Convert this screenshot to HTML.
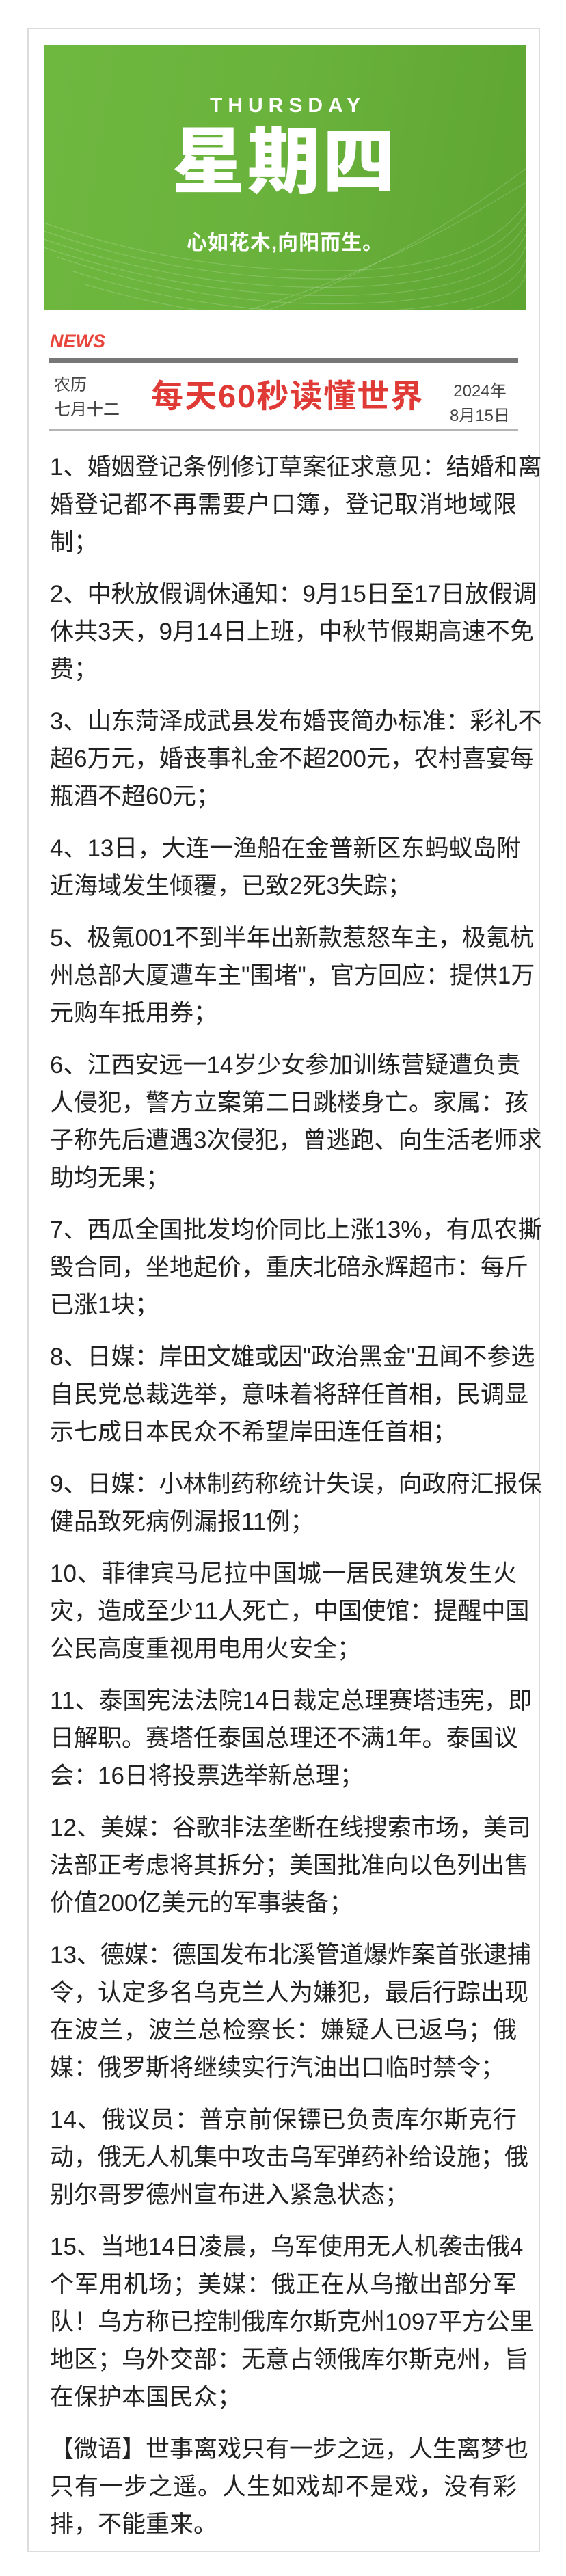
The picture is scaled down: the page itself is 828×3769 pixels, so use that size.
<!DOCTYPE html>
<html><head><meta charset="utf-8"><style>
*{margin:0;padding:0;box-sizing:border-box}
html,body{width:828px;height:3769px;background:#fff;overflow:hidden}
body{position:relative;font-family:"Liberation Sans","Noto Sans CJK SC",sans-serif;color:#222}
.card{position:absolute;left:40px;top:41px;width:750px;height:3693px;border:2px solid #dcdcdc}
.green{position:absolute;left:64px;top:66px;width:706px;height:387px;background:linear-gradient(100deg,#6fb840 0%,#69b23b 50%,#5ea532 100%);overflow:hidden}
.abs{position:absolute;left:0;width:100%;text-align:center;color:#fff}
.news{position:absolute;left:73px;top:484px;font-size:27px;font-weight:bold;font-style:italic;color:#e8463c}
.bar{position:absolute;left:72px;top:524px;width:686px;height:7px;background:#777}
.line2{position:absolute;left:72px;top:628px;width:686px;height:2px;background:#b5b5b5}
.lunar{position:absolute;left:79px;top:546px;font-size:24px;line-height:36px;color:#444}
.title{position:absolute;left:221px;top:550px;font-size:47px;font-weight:bold;color:#e03a36;letter-spacing:2px;line-height:60px}
.date{position:absolute;left:652px;top:555px;width:100px;text-align:center;font-size:24px;line-height:36px;color:#444}
.txt{position:absolute;left:73px;top:656px;width:683px;font-size:35px;line-height:55px}
.p{margin-bottom:21px}
.l{text-align:justify;text-align-last:justify;white-space:nowrap}
.e{white-space:nowrap}
</style></head><body>
<div class="card"></div>
<div class="green">
<svg width="706" height="387" style="position:absolute;left:0;top:0">
<g fill="none" stroke="#ffffff" stroke-opacity="0.18" stroke-width="1.2">
<path d="M0 260 Q200 330 420 330 T706 230"/>
<path d="M0 272 Q210 345 430 342 T706 245"/>
<path d="M0 284 Q220 360 440 354 T706 260"/>
<path d="M0 296 Q230 372 450 366 T706 275"/>
<path d="M20 310 Q240 385 460 378 T706 292"/>
<path d="M40 330 Q250 398 470 390 T706 310"/>
<path d="M60 350 Q260 410 480 402 T706 330"/>
<path d="M300 387 Q500 330 706 200"/>
<path d="M330 387 Q520 320 706 180"/>
</g></svg>
<div class="abs" style="top:72px;font-size:30px;font-weight:bold;letter-spacing:8px;padding-left:8px">THURSDAY</div>
<div class="abs" style="top:112px;font-size:106px;font-weight:900;line-height:120px;letter-spacing:4px">星期四</div>
<div class="abs" style="top:264px;font-size:30px;font-weight:bold;letter-spacing:1px">心如花木,向阳而生。</div>
</div>
<div class="news">NEWS</div>
<div class="bar"></div>
<div class="lunar">农历<br>七月十二</div>
<div class="title">每天60秒读懂世界</div>
<div class="date">2024年<br>8月15日</div>
<div class="line2"></div>
<div class="txt">
<div class="p"><div class="l">1、婚姻登记条例修订草案征求意见：结婚和离</div><div class="l">婚登记都不再需要户口簿，登记取消地域限</div><div class="e">制；</div></div>
<div class="p"><div class="l">2、中秋放假调休通知：9月15日至17日放假调</div><div class="l">休共3天，9月14日上班，中秋节假期高速不免</div><div class="e">费；</div></div>
<div class="p"><div class="l">3、山东菏泽成武县发布婚丧简办标准：彩礼不</div><div class="l">超6万元，婚丧事礼金不超200元，农村喜宴每</div><div class="e">瓶酒不超60元；</div></div>
<div class="p"><div class="l">4、13日，大连一渔船在金普新区东蚂蚁岛附</div><div class="e">近海域发生倾覆，已致2死3失踪；</div></div>
<div class="p"><div class="l">5、极氪001不到半年出新款惹怒车主，极氪杭</div><div class="l">州总部大厦遭车主"围堵"，官方回应：提供1万</div><div class="e">元购车抵用券；</div></div>
<div class="p"><div class="l">6、江西安远一14岁少女参加训练营疑遭负责</div><div class="l">人侵犯，警方立案第二日跳楼身亡。家属：孩</div><div class="l">子称先后遭遇3次侵犯，曾逃跑、向生活老师求</div><div class="e">助均无果；</div></div>
<div class="p"><div class="l">7、西瓜全国批发均价同比上涨13%，有瓜农撕</div><div class="l">毁合同，坐地起价，重庆北碚永辉超市：每斤</div><div class="e">已涨1块；</div></div>
<div class="p"><div class="l">8、日媒：岸田文雄或因"政治黑金"丑闻不参选</div><div class="l">自民党总裁选举，意味着将辞任首相，民调显</div><div class="e">示七成日本民众不希望岸田连任首相；</div></div>
<div class="p"><div class="l">9、日媒：小林制药称统计失误，向政府汇报保</div><div class="e">健品致死病例漏报11例；</div></div>
<div class="p"><div class="l">10、菲律宾马尼拉中国城一居民建筑发生火</div><div class="l">灾，造成至少11人死亡，中国使馆：提醒中国</div><div class="e">公民高度重视用电用火安全；</div></div>
<div class="p"><div class="l">11、泰国宪法法院14日裁定总理赛塔违宪，即</div><div class="l">日解职。赛塔任泰国总理还不满1年。泰国议</div><div class="e">会：16日将投票选举新总理；</div></div>
<div class="p"><div class="l">12、美媒：谷歌非法垄断在线搜索市场，美司</div><div class="l">法部正考虑将其拆分；美国批准向以色列出售</div><div class="e">价值200亿美元的军事装备；</div></div>
<div class="p"><div class="l">13、德媒：德国发布北溪管道爆炸案首张逮捕</div><div class="l">令，认定多名乌克兰人为嫌犯，最后行踪出现</div><div class="l">在波兰，波兰总检察长：嫌疑人已返乌；俄</div><div class="e">媒：俄罗斯将继续实行汽油出口临时禁令；</div></div>
<div class="p"><div class="l">14、俄议员：普京前保镖已负责库尔斯克行</div><div class="l">动，俄无人机集中攻击乌军弹药补给设施；俄</div><div class="e">别尔哥罗德州宣布进入紧急状态；</div></div>
<div class="p"><div class="l">15、当地14日凌晨，乌军使用无人机袭击俄4</div><div class="l">个军用机场；美媒：俄正在从乌撤出部分军</div><div class="l">队！乌方称已控制俄库尔斯克州1097平方公里</div><div class="l">地区；乌外交部：无意占领俄库尔斯克州，旨</div><div class="e">在保护本国民众；</div></div>
<div class="p"><div class="l">【微语】世事离戏只有一步之远，人生离梦也</div><div class="l">只有一步之遥。人生如戏却不是戏，没有彩</div><div class="e">排，不能重来。</div></div>
</div>
</body></html>
